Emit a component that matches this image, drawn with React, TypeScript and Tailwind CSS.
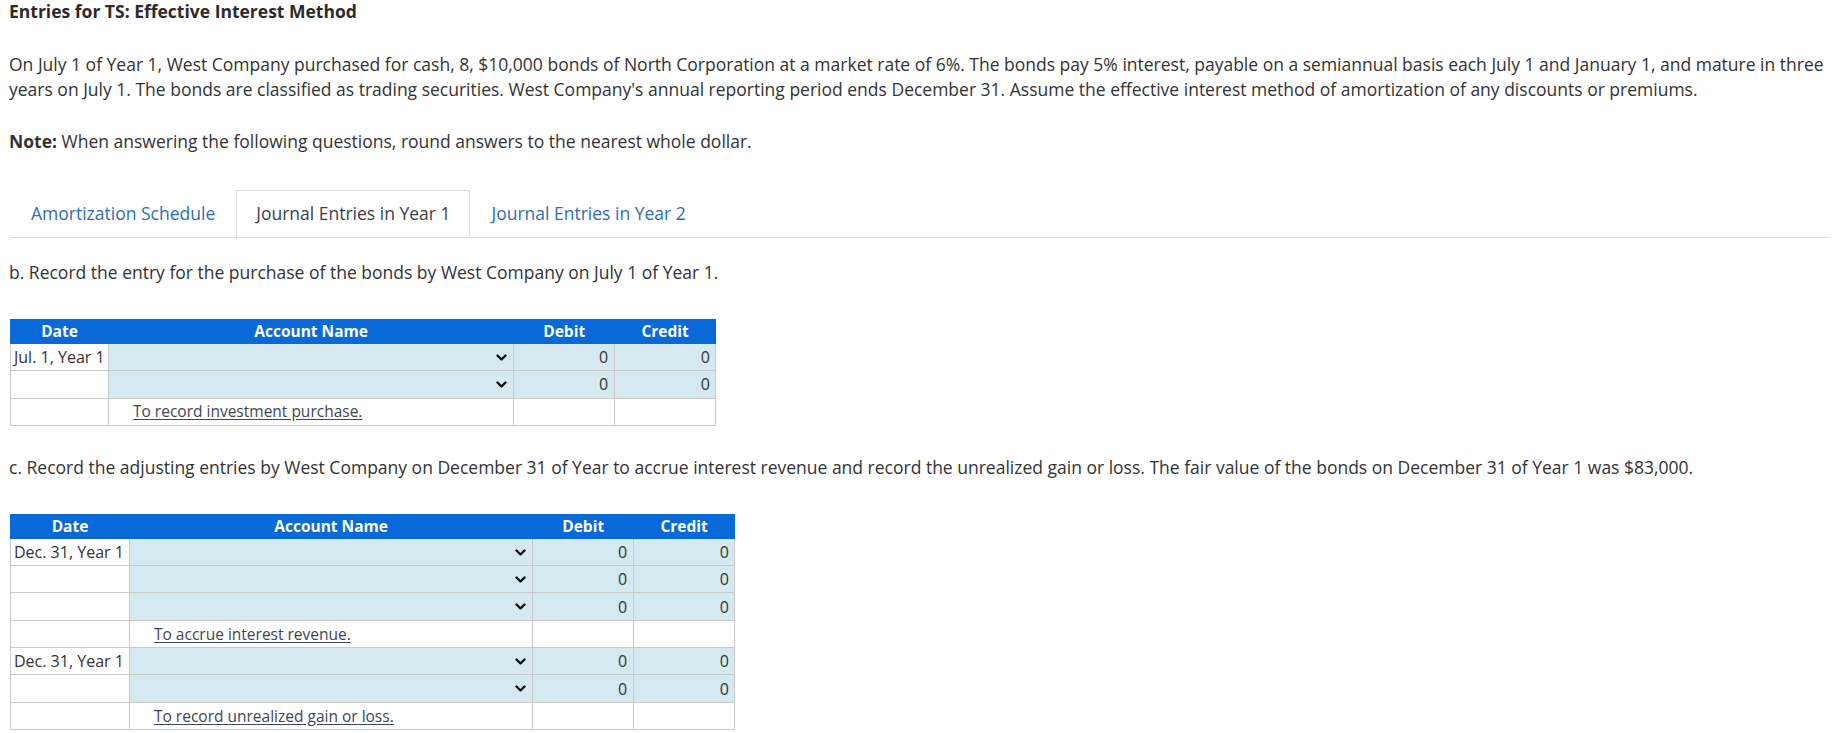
import React from 'react';

type Row =
  | { kind: 'entry'; date?: string }
  | { kind: 'note'; text: string };

const Chevron = () => (
  <svg width="11" height="7" viewBox="0 0 11 7" className="shrink-0">
    <path d="M1.5 1.5 L5.5 5.5 L9.5 1.5" fill="none" stroke="#111" strokeWidth="2.4" strokeLinecap="round" strokeLinejoin="round" />
  </svg>
);

const JournalTable = ({ widths, rows }: { widths: number[]; rows: Row[] }) => {
  return (
    <table className="border-collapse text-[16px] text-[#333]" style={{ width: widths.reduce((a, b) => a + b, 0) }}>
      <colgroup>
        {widths.map((w, i) => (
          <col key={i} style={{ width: w }} />
        ))}
      </colgroup>
      <thead>
        <tr className="h-[24px] bg-[#0a69d8] text-white text-[15.5px]">
          <th className="border border-[#0a69d8] font-bold leading-none">Date</th>
          <th className="border border-[#0a69d8] font-bold leading-none">Account Name</th>
          <th className="border border-[#0a69d8] font-bold leading-none">Debit</th>
          <th className="border border-[#0a69d8] font-bold leading-none">Credit</th>
        </tr>
      </thead>
      <tbody>
        {rows.map((r, i) =>
          r.kind === 'entry' ? (
            <tr key={i} className="h-[27.3px]">
              <td className="border border-[#c9c9c9] bg-white px-[3px] whitespace-nowrap leading-none">{r.date ?? ''}</td>
              <td className="border border-[#c9c9c9] bg-[#d4eaf0] pr-[6px]">
                <div className="flex justify-end items-center">
                  <Chevron />
                </div>
              </td>
              <td className="border border-[#c9c9c9] bg-[#d4eaf0] pr-[6px] text-right leading-none">0</td>
              <td className="border border-[#c9c9c9] bg-[#d4eaf0] pr-[5px] text-right leading-none">0</td>
            </tr>
          ) : (
            <tr key={i} className="h-[27.3px]">
              <td className="border border-[#c9c9c9] bg-white"></td>
              <td className="border border-[#c9c9c9] bg-white pl-[24px] leading-none">
                <span className="underline underline-offset-2 text-[15.5px] text-[#3d4656]">{r.text}</span>
              </td>
              <td className="border border-[#c9c9c9] bg-white"></td>
              <td className="border border-[#c9c9c9] bg-white"></td>
            </tr>
          )
        )}
      </tbody>
    </table>
  );
};

export default function App() {
  const tabs = ['Amortization Schedule', 'Journal Entries in Year 1', 'Journal Entries in Year 2'];
  const active = 1;

  return (
    <div className="min-h-[733px] bg-white pl-[9px] pr-[4px] text-[17.5px] text-[#333]" style={{ fontFamily: '"Open Sans", "Liberation Sans", sans-serif' }}>
      <h1 className="font-bold text-[17.5px] leading-[22px] text-[#2b2b2b]">Entries for TS: Effective Interest Method</h1>

      <p className="mt-[30px] leading-[24.5px]">
        On July 1 of Year 1, West Company purchased for cash, 8, $10,000 bonds of North Corporation at a market rate of 6%. The bonds pay 5% interest, payable on a semiannual basis each July 1 and January 1, and mature in three years on July 1. The bonds are classified as trading securities. West Company's annual reporting period ends December 31. Assume the effective interest method of amortization of any discounts or premiums.
      </p>

      <p className="mt-[28px] leading-[24px]">
        <span className="font-bold">Note:</span> When answering the following questions, round answers to the nearest whole dollar.
      </p>

      <div className="mt-[37px] ml-px flex border-b border-[#dcdde4]">
        {tabs.map((t, i) => (
          <div
            key={t}
            className={
              i === active
                ? 'h-[47px] -mb-px flex items-center px-[19px] border border-b-white border-[#dcdde4] bg-white text-[#3a3f4a]'
                : 'h-[47px] flex items-center px-[20px] border border-transparent text-[#2f6db5]'
            }
          >
            {t}
          </div>
        ))}
      </div>

      <p className="mt-[22px] leading-[24px]">b. Record the entry for the purchase of the bonds by West Company on July 1 of Year 1.</p>

      <div className="mt-[35px] ml-px">
        <JournalTable
          widths={[98, 406, 101, 101]}
          rows={[
            { kind: 'entry', date: 'Jul. 1, Year 1' },
            { kind: 'entry' },
            { kind: 'note', text: 'To record investment purchase.' },
          ]}
        />
      </div>

      <p className="mt-[29px] leading-[24px]">
        c. Record the adjusting entries by West Company on December 31 of Year to accrue interest revenue and record the unrealized gain or loss. The fair value of the bonds on December 31 of Year 1 was $83,000.
      </p>

      <div className="mt-[35px] ml-px">
        <JournalTable
          widths={[119, 404, 101, 101]}
          rows={[
            { kind: 'entry', date: 'Dec. 31, Year 1' },
            { kind: 'entry' },
            { kind: 'entry' },
            { kind: 'note', text: 'To accrue interest revenue.' },
            { kind: 'entry', date: 'Dec. 31, Year 1' },
            { kind: 'entry' },
            { kind: 'note', text: 'To record unrealized gain or loss.' },
          ]}
        />
      </div>
    </div>
  );
}
